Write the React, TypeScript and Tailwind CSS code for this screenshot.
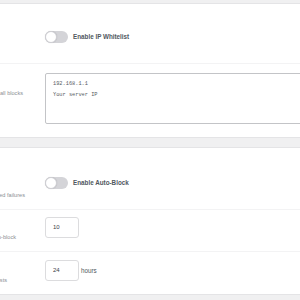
import React from "react";

const sans = { fontFamily: '"Liberation Sans", Arial, sans-serif' };
const mono = { fontFamily: '"Liberation Mono", "Courier New", monospace' };

function Toggle({ label }: { label: string }) {
  return (
    <div className="flex items-center gap-[5px]">
      <div className="relative h-[12px] w-[23px] rounded-full bg-[#d4d4d8]">
        <div className="absolute left-0 top-0 h-[12px] w-[12px] rounded-full border border-[#cfcfd4] bg-white shadow-[0_0_1px_rgba(0,0,0,0.2)]" />
      </div>
      <span className="text-[6.3px] font-bold leading-[8px] text-[#50575e]">{label}</span>
    </div>
  );
}

function Desc({ text, pr, pt }: { text: string; pr: string; pt: string }) {
  return (
    <div className={`flex w-[45px] shrink-0 justify-end ${pr} ${pt}`}>
      <span className="whitespace-nowrap text-[5.6px] leading-[8px] text-[#8c8f94]">{text}</span>
    </div>
  );
}

export default function App() {
  return (
    <div className="h-[300px] w-[300px] overflow-hidden bg-[#f0f0f1] pt-[3px]" style={sans}>
      <div className="border-y border-[#e4e4e6] bg-white">
        <div className="flex h-[60px] border-b border-[#f3f3f4]">
          <div className="w-[45px] shrink-0" />
          <div className="pt-[27px]">
            <Toggle label="Enable IP Whitelist" />
          </div>
        </div>
        <div className="flex h-[73px]">
          <Desc text="Comma-separated IPs that bypass all blocks" pr="pr-[22px]" pt="pt-[25px]" />
          <div className="flex-1 pt-[9px]">
            <div
              className="h-[51px] w-[280px] rounded-[2px] border border-[#c3c4c7] px-[7px] pt-[5px] text-[5.3px] leading-[10.5px] text-[#555b61]"
              style={mono}
            >
              <div>192.168.1.1</div>
              <div>Your server IP</div>
            </div>
          </div>
        </div>
      </div>
      <div className="mt-[9px] border-y border-[#e4e4e6] bg-white">
        <div className="flex h-[62px] border-b border-[#f3f3f4]">
          <Desc text="Automatically block IPs after repeated failures" pr="pr-[20px]" pt="pt-[43px]" />
          <div className="pt-[29px]">
            <Toggle label="Enable Auto-Block" />
          </div>
        </div>
        <div className="flex h-[42px] border-b border-[#f3f3f4]">
          <Desc text="Failed attempts before auto-block" pr="pr-[29px]" pt="pt-[23px]" />
          <div className="pt-[7px]">
            <div className="flex h-[21px] w-[34px] items-center rounded-[3px] border border-[#dcdcde] px-[7px] text-[6px] text-[#3c434a]">
              10
            </div>
          </div>
        </div>
        <div className="flex h-[42px]">
          <Desc text="How long to block offending requests" pr="pr-[38px]" pt="pt-[24px]" />
          <div className="flex items-center gap-[2px] self-start pt-[8px]">
            <div className="flex h-[21px] w-[34px] items-center rounded-[3px] border border-[#dcdcde] px-[7px] text-[6px] text-[#3c434a]">
              24
            </div>
            <span className="text-[6.3px] text-[#50575e]">hours</span>
          </div>
        </div>
      </div>
    </div>
  );
}
